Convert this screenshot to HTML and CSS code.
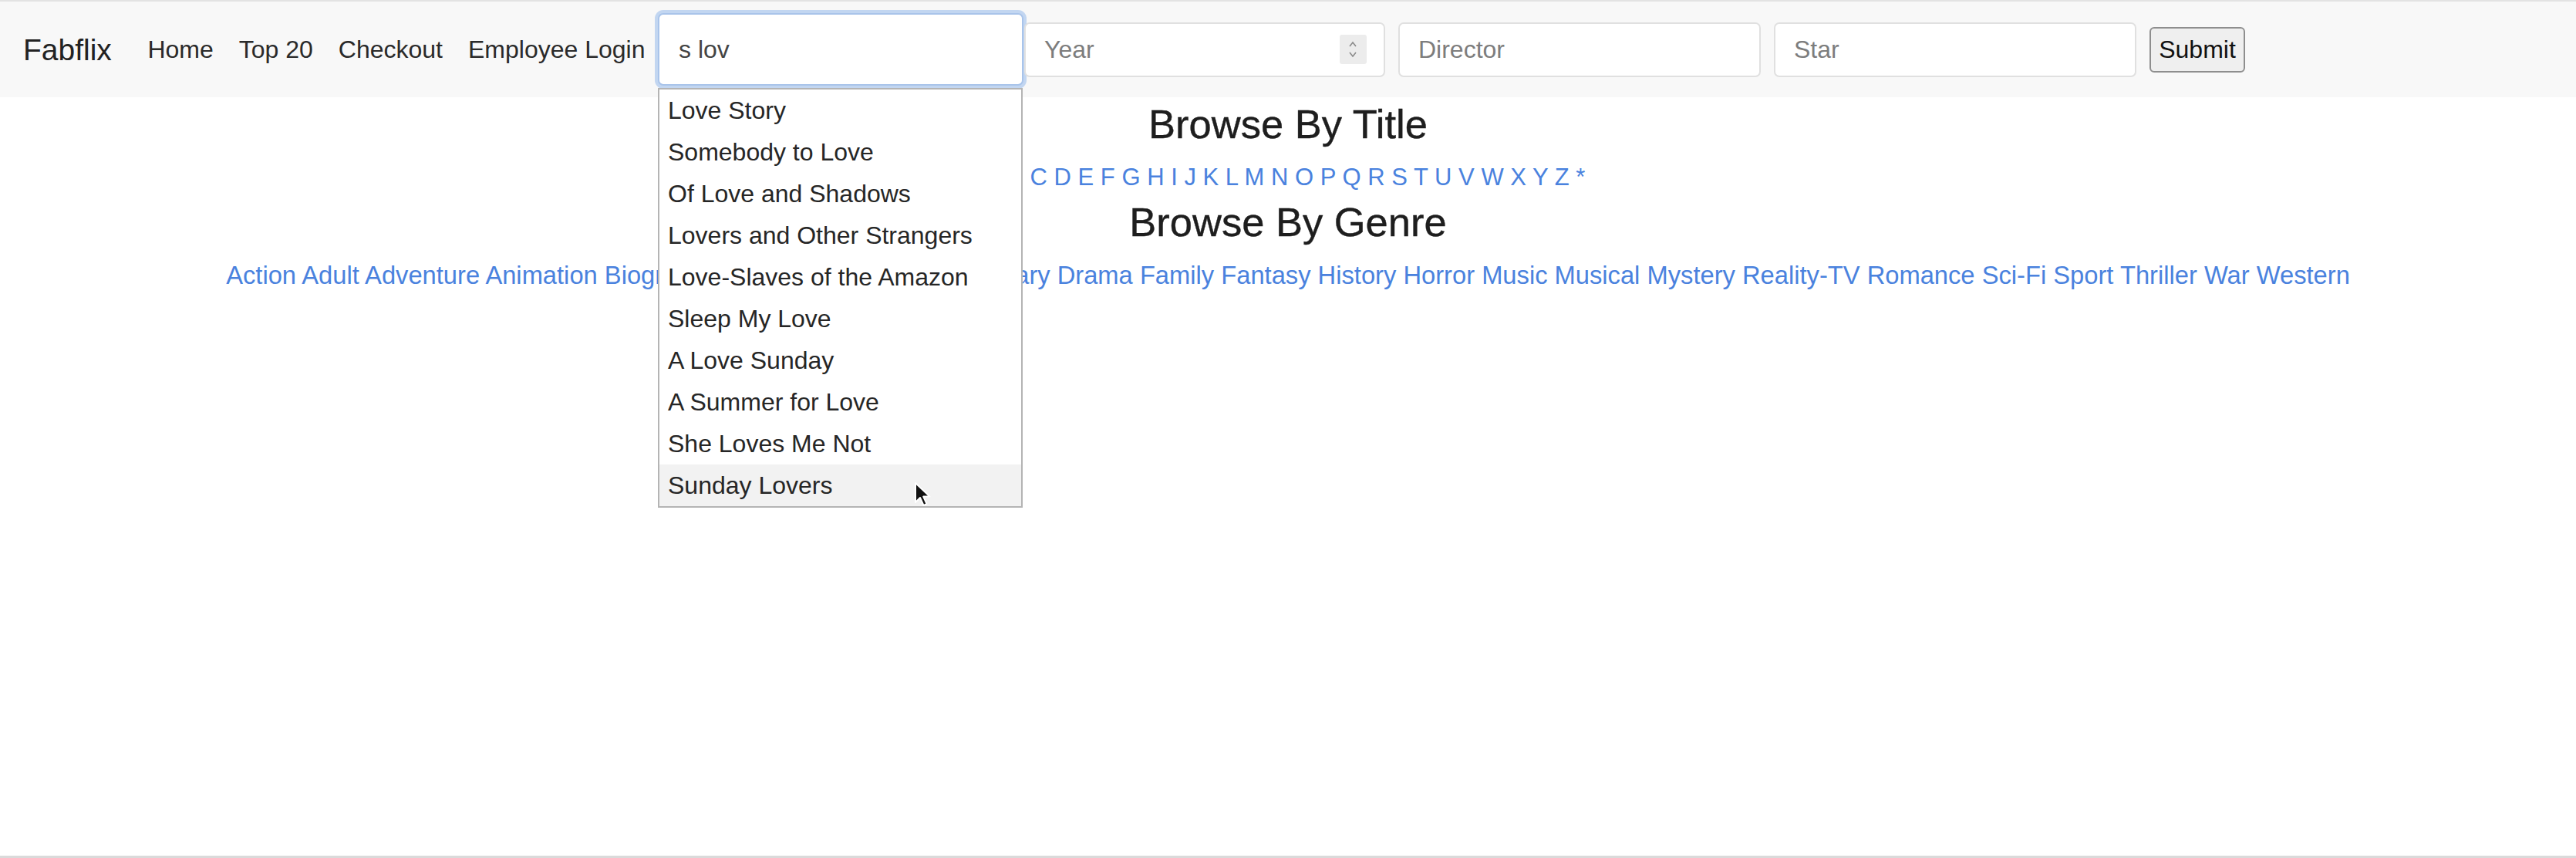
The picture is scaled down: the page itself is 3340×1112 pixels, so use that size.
FILE: index.html
```html
<!DOCTYPE html>
<html lang="en">
<head>
<meta charset="utf-8">
<title>Fabflix</title>
<link rel="stylesheet" href="styles.css">
</head>
<body>
<nav class="navbar">
  <a class="brand" href="#">Fabflix</a>
  <ul class="nav-links">
    <li><a href="#">Home</a></li>
    <li><a href="#">Top 20</a></li>
    <li><a href="#">Checkout</a></li>
    <li><a href="#">Employee Login</a></li>
  </ul>
  <form class="search-form">
    <div class="search-wrap">
      <input class="field field-title" type="text" value="s lov">
      <ul class="suggestions">
        <li>Love Story</li>
        <li>Somebody to Love</li>
        <li>Of Love and Shadows</li>
        <li>Lovers and Other Strangers</li>
        <li>Love-Slaves of the Amazon</li>
        <li>Sleep My Love</li>
        <li>A Love Sunday</li>
        <li>A Summer for Love</li>
        <li>She Loves Me Not</li>
        <li class="hovered">Sunday Lovers</li>
      </ul>
    </div>
    <div class="year-wrap">
      <input class="field field-year" type="text" placeholder="Year">
      <span class="spin">
        <svg width="14" height="30" viewBox="0 0 14 30"><path d="M3 11 L7 6 L11 11" fill="none" stroke="#8a8a8a" stroke-width="1.6"/><path d="M3 19 L7 24 L11 19" fill="none" stroke="#8a8a8a" stroke-width="1.6"/></svg>
      </span>
    </div>
    <input class="field field-mid" type="text" placeholder="Director">
    <input class="field field-mid" type="text" placeholder="Star">
    <button class="submit" type="button">Submit</button>
  </form>
</nav>

<main class="content">
  <h3 class="heading">Browse By Title</h3>
  <div class="link-row letter-row">
    <a href="#">A</a> <a href="#">B</a> <a href="#">C</a> <a href="#">D</a> <a href="#">E</a> <a href="#">F</a> <a href="#">G</a> <a href="#">H</a> <a href="#">I</a> <a href="#">J</a> <a href="#">K</a> <a href="#">L</a> <a href="#">M</a> <a href="#">N</a> <a href="#">O</a> <a href="#">P</a> <a href="#">Q</a> <a href="#">R</a> <a href="#">S</a> <a href="#">T</a> <a href="#">U</a> <a href="#">V</a> <a href="#">W</a> <a href="#">X</a> <a href="#">Y</a> <a href="#">Z</a> <a href="#">*</a>
  </div>
  <h3 class="heading">Browse By Genre</h3>
  <div class="link-row genre-row">
    <a href="#">Action</a> <a href="#">Adult</a> <a href="#">Adventure</a> <a href="#">Animation</a> <a href="#">Biography</a> <a href="#">Comedy</a> <a href="#">Crime</a> <a href="#">Documentary</a> <a href="#">Drama</a> <a href="#">Family</a> <a href="#">Fantasy</a> <a href="#">History</a> <a href="#">Horror</a> <a href="#">Music</a> <a href="#">Musical</a> <a href="#">Mystery</a> <a href="#">Reality-TV</a> <a href="#">Romance</a> <a href="#">Sci-Fi</a> <a href="#">Sport</a> <a href="#">Thriller</a> <a href="#">War</a> <a href="#">Western</a>
  </div>
</main>

<div class="bottom-line"></div>

<svg class="cursor" width="24" height="34" viewBox="0 0 24 34"><path d="M2 2 L2 27 L8 21 L12.5 31 L16.5 29.2 L12.2 19.6 L20.5 19.6 Z" fill="#111" stroke="#fff" stroke-width="2" stroke-linejoin="round"/></svg>
</body>
</html>
```

FILE: styles.css
```css
* { box-sizing: border-box; }

html, body {
  margin: 0;
  padding: 0;
}

body {
  font-family: "Liberation Sans", Arial, sans-serif;
  color: #212529;
  background: #fff;
  min-height: 100vh;
  display: flex;
  flex-direction: column;
  position: relative;
}

.navbar {
  display: flex;
  align-items: center;
  height: 126px;
  padding: 0 0 0 30px;
  background: #f8f8f8;
  border-top: 2px solid #e3e3e3;
}

.brand {
  font-size: 39px;
  color: #222;
  text-decoration: none;
  margin-right: 30px;
  line-height: 1;
}

.nav-links {
  display: flex;
  list-style: none;
  margin: 0;
  padding: 0;
}

.nav-links a {
  display: block;
  padding: 0 16.5px;
  font-size: 32px;
  color: #2a2a2a;
  text-decoration: none;
}

.search-form {
  display: flex;
  align-items: center;
}

.field {
  font-family: "Liberation Sans", Arial, sans-serif;
  font-size: 32px;
  color: #444;
  background: #fff;
  border: 2px solid #e0e0e0;
  border-radius: 7px;
  padding: 0 24px;
  height: 71px;
  outline: none;
}

.field::placeholder {
  color: #7d7d7d;
}

.search-wrap {
  position: relative;
}

.field-title {
  width: 474px;
  height: 94px;
  padding-left: 25px;
  border: 2px solid #a9c4ea;
  box-shadow: 0 0 0 4px rgba(150, 185, 235, 0.55);
}

.suggestions {
  position: absolute;
  left: 0;
  top: 97px;
  width: 473px;
  margin: 0;
  padding: 0;
  list-style: none;
  background: #fff;
  border: 2px solid #b4b4b4;
  z-index: 5;
}

.suggestions li {
  height: 54px;
  line-height: 54px;
  padding-left: 11px;
  font-size: 32px;
  color: #262626;
  white-space: nowrap;
}

.suggestions li.hovered {
  background: #f2f2f2;
}

.year-wrap {
  position: relative;
  margin-left: 1px;
  margin-right: 17px;
}

.field-year {
  width: 468px;
}

.spin {
  position: absolute;
  right: 24px;
  top: 16px;
  width: 35px;
  height: 38px;
  background: #ececec;
  border-radius: 3px;
  display: flex;
  align-items: center;
  justify-content: center;
}

.field-mid {
  width: 470px;
  margin-right: 17px;
}

.submit {
  font-family: "Liberation Sans", Arial, sans-serif;
  font-size: 32px;
  color: #111;
  height: 59px;
  width: 124px;
  padding: 0;
  background: #efefef;
  border: 2px solid #8e8e8e;
  border-radius: 6px;
}

.content {
  text-align: center;
}

.heading {
  font-size: 52.5px;
  font-weight: 400;
  line-height: 62px;
  margin: 4px 0 15px;
  color: #1e1e1e;
  -webkit-text-stroke: 0.4px #1e1e1e;
}

.link-row {
  font-size: 31px;
  line-height: 46px;
}

.letter-row {
  padding-right: 6px;
}

.link-row a {
  color: #4a82de;
  text-decoration: none;
}

.genre-row {
  font-size: 32.7px;
}

.bottom-line {
  margin-top: auto;
  height: 3px;
  background: #dadada;
}

.cursor {
  position: absolute;
  left: 1185px;
  top: 624px;
  z-index: 10;
}
```
